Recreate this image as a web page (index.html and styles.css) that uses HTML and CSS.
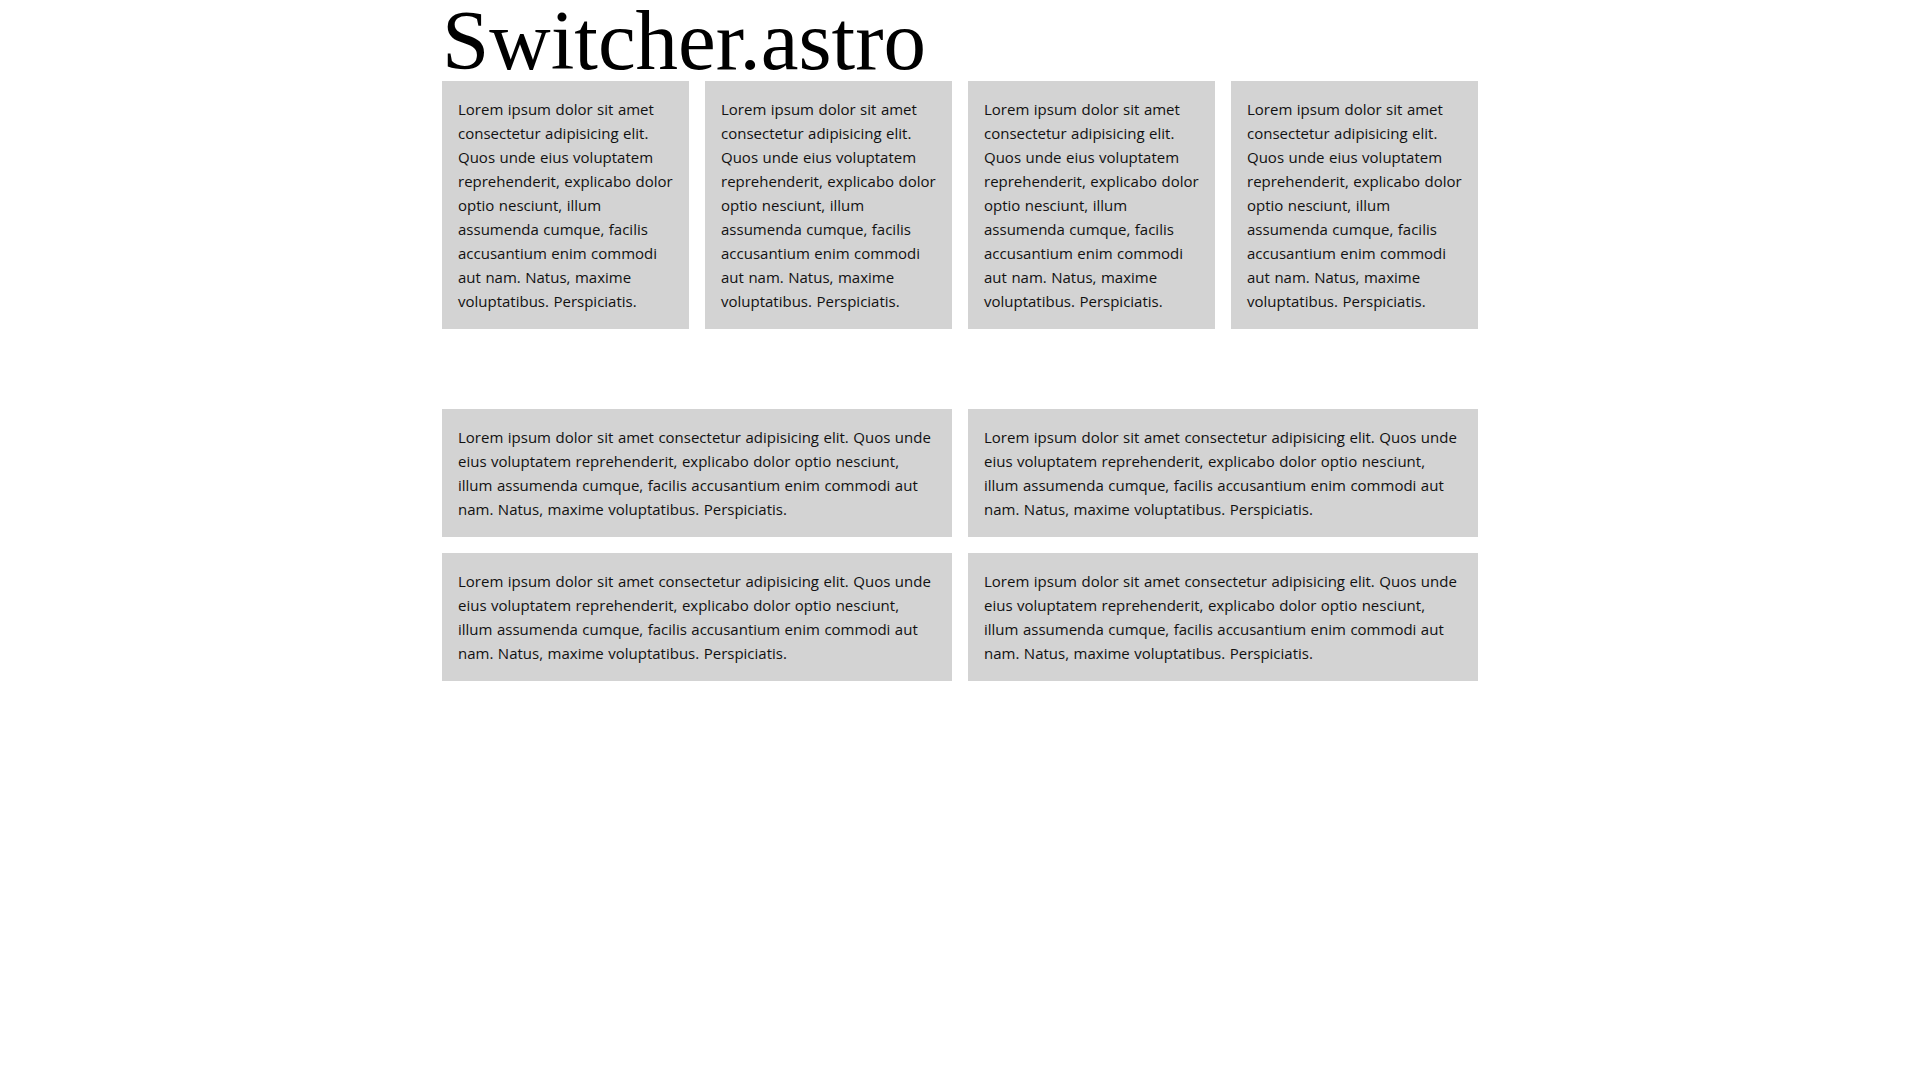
FILE: index.html
```html
<!DOCTYPE html>
<html lang="en">
<head>
<meta charset="utf-8">
<title>Switcher.astro</title>
<link rel="stylesheet" href="styles.css">
</head>
<body>
<main class="page">
  <h1 class="title">Switcher.astro</h1>
  <section class="switcher switcher-four">
    <div class="card">Lorem ipsum dolor sit amet consectetur adipisicing elit. Quos unde eius voluptatem reprehenderit, explicabo dolor optio nesciunt, illum assumenda cumque, facilis accusantium enim commodi aut nam. Natus, maxime voluptatibus. Perspiciatis.</div>
    <div class="card">Lorem ipsum dolor sit amet consectetur adipisicing elit. Quos unde eius voluptatem reprehenderit, explicabo dolor optio nesciunt, illum assumenda cumque, facilis accusantium enim commodi aut nam. Natus, maxime voluptatibus. Perspiciatis.</div>
    <div class="card">Lorem ipsum dolor sit amet consectetur adipisicing elit. Quos unde eius voluptatem reprehenderit, explicabo dolor optio nesciunt, illum assumenda cumque, facilis accusantium enim commodi aut nam. Natus, maxime voluptatibus. Perspiciatis.</div>
    <div class="card">Lorem ipsum dolor sit amet consectetur adipisicing elit. Quos unde eius voluptatem reprehenderit, explicabo dolor optio nesciunt, illum assumenda cumque, facilis accusantium enim commodi aut nam. Natus, maxime voluptatibus. Perspiciatis.</div>
  </section>
  <section class="switcher switcher-two">
    <div class="card">Lorem ipsum dolor sit amet consectetur adipisicing elit. Quos unde eius voluptatem reprehenderit, explicabo dolor optio nesciunt, illum assumenda cumque, facilis accusantium enim commodi aut nam. Natus, maxime voluptatibus. Perspiciatis.</div>
    <div class="card">Lorem ipsum dolor sit amet consectetur adipisicing elit. Quos unde eius voluptatem reprehenderit, explicabo dolor optio nesciunt, illum assumenda cumque, facilis accusantium enim commodi aut nam. Natus, maxime voluptatibus. Perspiciatis.</div>
    <div class="card">Lorem ipsum dolor sit amet consectetur adipisicing elit. Quos unde eius voluptatem reprehenderit, explicabo dolor optio nesciunt, illum assumenda cumque, facilis accusantium enim commodi aut nam. Natus, maxime voluptatibus. Perspiciatis.</div>
    <div class="card">Lorem ipsum dolor sit amet consectetur adipisicing elit. Quos unde eius voluptatem reprehenderit, explicabo dolor optio nesciunt, illum assumenda cumque, facilis accusantium enim commodi aut nam. Natus, maxime voluptatibus. Perspiciatis.</div>
  </section>
</main>
</body>
</html>
```
FILE: styles.css
```css
html, body {
  margin: 0;
  padding: 0;
  background: #ffffff;
}

.page {
  max-width: 1036px;
  margin: 0 auto;
}

.title {
  margin: 0;
  font-family: "Liberation Serif", "Times New Roman", serif;
  font-weight: 400;
  font-size: 85px;
  line-height: 81px;
  color: #000;
}

.switcher {
  display: grid;
  gap: 16px;
}

.switcher-four {
  grid-template-columns: repeat(4, 1fr);
}

.switcher-two {
  grid-template-columns: repeat(2, 1fr);
  margin-top: 80px;
}

.card {
  background: #d3d3d3;
  padding: 16px;
  font-family: "Open Sans", "Noto Sans", sans-serif;
  font-size: 15px;
  line-height: 24px;
  word-spacing: 0.6px;
  color: #111;
}
```
